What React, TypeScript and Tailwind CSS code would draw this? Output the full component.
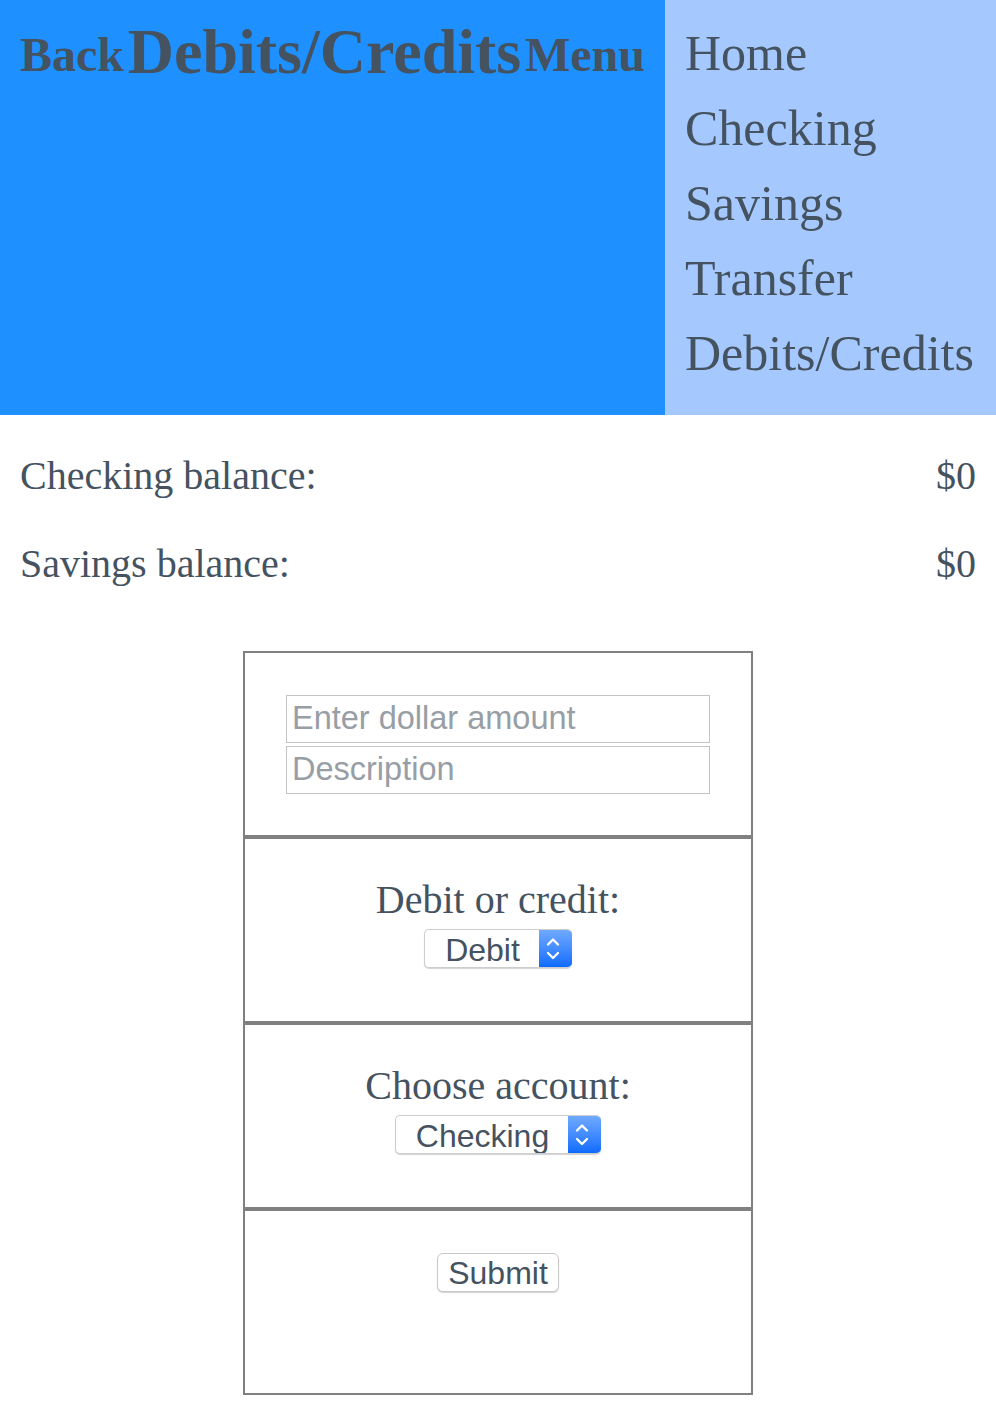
import React from "react";

const serif = "font-['Liberation_Serif',_'Times_New_Roman',_serif]";
const sans = "font-['Liberation_Sans',_Arial,_sans-serif]";

function FakeSelect({ value }: { value: string }) {
  return (
    <div className="inline-flex h-[39px] overflow-hidden rounded-[5px] border border-r-0 border-[#cdcdcd] bg-white shadow-[0_1px_1px_rgba(0,0,0,0.18)]">
      <span className={`${sans} pl-5 pr-[19px] text-[32px] leading-[40px] text-[#45525f]`}>{value}</span>
      <span className="flex w-[33px] items-start justify-center bg-gradient-to-b from-[#6fa9ff] to-[#0a6bff]">
        <svg width="33" height="39" viewBox="0 0 33 39" fill="none" stroke="white" strokeWidth="2.3" strokeLinecap="round" strokeLinejoin="round">
          <path d="M9 14.5 L14 9.5 L19 14.5" />
          <path d="M9 23 L14 28 L19 23" />
        </svg>
      </span>
    </div>
  );
}

export default function App() {
  const navItems = ["Home", "Checking", "Savings", "Transfer", "Debits/Credits"];
  return (
    <div className={`${serif} min-h-[1402px] w-full bg-white text-[#45525f]`}>
      <header className="flex h-[415px]">
        <div className="flex-1 bg-[#1e90ff] px-5 pt-4">
          <div className="flex items-start justify-between font-bold">
            <span className="mt-[11px] text-[48px] leading-[55px]">Back</span>
            <span className="text-[64px] leading-[72px]">Debits/Credits</span>
            <span className="mt-[11px] text-[48px] leading-[55px]">Menu</span>
          </div>
        </div>
        <nav className="flex w-[331px] flex-col bg-[#a5c9ff] pl-5 pt-4">
          {navItems.map((n) => (
            <span key={n} className="text-[50px] leading-[75px]">
              {n}
            </span>
          ))}
        </nav>
      </header>

      <section className="flex flex-col gap-[42px] px-5 pt-[38px] text-[40px] leading-[46px]">
        <div className="flex h-[46px] justify-between">
          <span>Checking balance:</span>
          <span>$0</span>
        </div>
        <div className="flex h-[46px] justify-between">
          <span>Savings balance:</span>
          <span>$0</span>
        </div>
      </section>

      <div className="mx-auto mt-[64px] flex w-[510px] flex-col">
        <div className="flex h-[186px] flex-col items-center justify-center gap-[3px] border-2 border-[#808080]">
          <div className={`${sans} flex h-[48px] w-[424px] items-center border border-[#c4c4c4] pl-[5px] text-[32.5px] text-[#979ea6]`}>
            Enter dollar amount
          </div>
          <div className={`${sans} flex h-[48px] w-[424px] items-center border border-[#c4c4c4] pl-[5px] text-[32.5px] text-[#979ea6]`}>
            Description
          </div>
        </div>

        <div className="flex h-[186px] flex-col items-center border-2 border-[#808080] pt-[38px]">
          <span className="text-[40px] leading-[46px]">Debit or credit:</span>
          <div className="mt-[6px]">
            <FakeSelect value="Debit" />
          </div>
        </div>

        <div className="flex h-[186px] flex-col items-center border-2 border-[#808080] pt-[38px]">
          <span className="text-[40px] leading-[46px]">Choose account:</span>
          <div className="mt-[6px]">
            <FakeSelect value="Checking" />
          </div>
        </div>

        <div className="flex h-[186px] flex-col items-center border-2 border-[#808080] pt-[42px]">
          <button
            className={`${sans} h-[39px] rounded-[6px] border border-[#c9c9c9] bg-white px-[10px] text-[32px] leading-[38px] text-[#45525f] shadow-[0_1px_1px_rgba(0,0,0,0.18)]`}
          >
            Submit
          </button>
        </div>
      </div>
    </div>
  );
}
